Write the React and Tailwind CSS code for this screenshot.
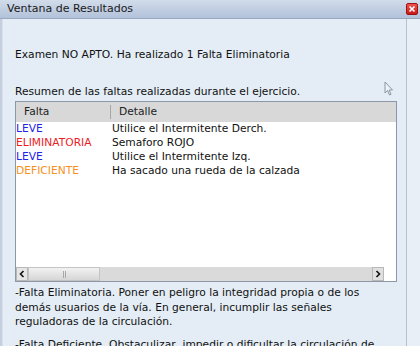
import React from "react";

const faltas = [
  { tipo: "LEVE", color: "text-[#2424e6]", detalle: "Utilice el Intermitente Derch." },
  { tipo: "ELIMINATORIA", color: "text-[#ec1c24]", detalle: "Semaforo ROJO" },
  { tipo: "LEVE", color: "text-[#2424e6]", detalle: "Utilice el Intermitente Izq." },
  { tipo: "DEFICIENTE", color: "text-[#f7901e]", detalle: "Ha sacado una rueda de la calzada" },
];

export default function App() {
  return (
    <div className="w-[420px] h-[346px] overflow-hidden flex flex-col bg-[#e4edf5] text-[10.7px] text-[#111] font-['DejaVu_Sans',sans-serif]">
      {/* title bar */}
      <div className="h-[19px] shrink-0 flex items-center justify-between pl-[7px] pr-[2px] bg-gradient-to-b from-[#d2dcea] to-[#b2c2da] border-b border-[#98a8c0]">
        <span className="text-[11px] text-[#1a1a1a]">Ventana de Resultados</span>
        <div className="w-[12px] h-[12px] rounded-[2px] bg-gradient-to-b from-[#f05050] to-[#c81818] border border-[#a01010] flex items-center justify-center">
          <svg width="8" height="8" viewBox="0 0 8 8">
            <path d="M1.5 1.5 L6.5 6.5 M6.5 1.5 L1.5 6.5" stroke="#fff" strokeWidth="1.6" />
          </svg>
        </div>
      </div>

      <div className="flex-1 flex min-h-0">
        <div className="w-[3px] bg-[#c4d0e0] border-r border-[#d6e0ec]" />
        <div className="relative w-[404px] border-r border-[#b4c0d0] pl-[12px] pt-[29px]">
          <p className="leading-[14px]">Examen NO APTO. Ha realizado 1 Falta Eliminatoria</p>
          <p className="leading-[14px] mt-[23px]">Resumen de las faltas realizadas durante el ejercicio.</p>

          {/* cursor */}
          <svg className="absolute left-[381px] top-[62px]" width="10" height="16" viewBox="0 0 10 16">
            <path d="M1 1 L1 12 L3.5 9.5 L5.5 14 L7 13.3 L5 9 L8.5 9 Z" fill="#eef2f6" stroke="#8a96a4" strokeWidth="1" />
          </svg>

          {/* table */}
          <div className="mt-[2px] w-[382px] h-[181px] bg-white border border-[#8c98a8] flex flex-col">
            <div className="h-[20px] flex items-center bg-[#d8d8d8] text-[#222]">
              <div className="w-[95px] pl-[8px] border-r border-[#a8a8a8] h-[14px] leading-[14px]">Falta</div>
              <div className="pl-[8px]">Detalle</div>
            </div>
            <div className="flex-1">
              {faltas.map((f, i) => (
                <div key={i} className="flex h-[14px] leading-[14px]">
                  <div className={`w-[95px] ${f.color}`}>{f.tipo}</div>
                  <div className="pl-[1px]">{f.detalle}</div>
                </div>
              ))}
            </div>
            {/* horizontal scrollbar */}
            <div className="h-[14px] flex">
              <div className="w-[368px] flex bg-[#dadada]">
                <div className="w-[12px] bg-[#e6e6e6] border border-[#b8b8b8] flex items-center justify-center">
                  <svg width="6" height="8" viewBox="0 0 6 8">
                    <path d="M4.5 1 L1.5 4 L4.5 7" stroke="#111" strokeWidth="1.6" fill="none" />
                  </svg>
                </div>
                <div className="w-[72px] bg-gradient-to-b from-[#f2f2f2] to-[#d6d6d6] border border-[#c4c4c4] flex items-center justify-center gap-[1px]">
                  <div className="w-[1px] h-[7px] bg-[#a8a8a8]" />
                  <div className="w-[1px] h-[7px] bg-[#a8a8a8]" />
                </div>
                <div className="flex-1" />
                <div className="w-[12px] bg-[#e0e0e0] border border-[#b8b8b8] flex items-center justify-center">
                  <svg width="6" height="8" viewBox="0 0 6 8">
                    <path d="M1.5 1 L4.5 4 L1.5 7" stroke="#111" strokeWidth="1.6" fill="none" />
                  </svg>
                </div>
              </div>
            </div>
          </div>

          <div className="mt-[4px] leading-[14.5px] w-[390px]">
            <p>-Falta Eliminatoria. Poner en peligro la integridad propia o de los</p>
            <p>demás usuarios de la vía. En general, incumplir las señales</p>
            <p>reguladoras de la circulación.</p>
            <p className="mt-[8.5px]">-Falta Deficiente. Obstaculizar, impedir o dificultar la circulación de</p>
          </div>
        </div>
        <div className="flex-1 bg-[#e8eff6]" />
      </div>
    </div>
  );
}
